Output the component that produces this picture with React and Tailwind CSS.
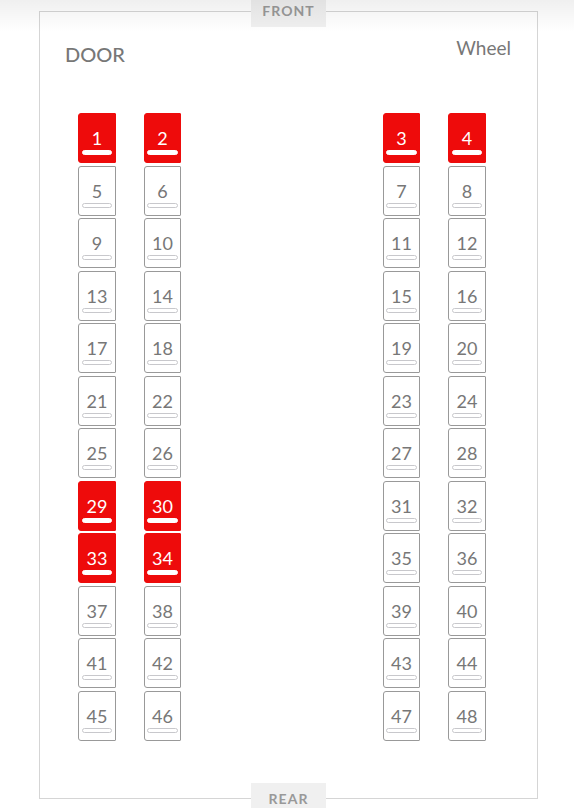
const ROWS = 12;
const TAKEN = new Set([1, 2, 3, 4, 29, 30, 33, 34]);

function Seat({ number, padding }) {
  const taken = TAKEN.has(number);
  return (
    <button
      type="button"
      disabled={taken}
      className={`flex h-[50px] w-full flex-col items-center justify-end rounded-l-[3px] rounded-r-[1px] border pb-[7px] text-lg leading-[22px] ${padding} ${
        taken ? 'border-[#ee0b0b] bg-[#ee0b0b] text-white' : 'border-[#999] bg-white text-[#777]'
      }`}
    >
      <span>{number}</span>
      <span
        className={`mt-px h-[5px] w-full rounded-[3px] border ${
          taken ? 'border-white bg-white' : 'border-[#c8c8cc] bg-white'
        }`}
      />
    </button>
  );
}

function SeatBlock({ first, columns, paddings }) {
  const rows = Array.from({ length: ROWS }, (_, i) => first + i * 4);
  return (
    <div className="flex h-[628px] w-[103px] flex-col justify-between">
      {rows.map((n) => (
        <div key={n} className={`grid justify-between ${columns}`}>
          <Seat number={n} padding={paddings[0]} />
          <Seat number={n + 1} padding={paddings[1]} />
        </div>
      ))}
    </div>
  );
}

function EndLabel({ children, className }) {
  return (
    <span
      className={`absolute inset-x-0 mx-auto flex h-8 w-[75px] items-center justify-center bg-[#f0f0f0] pb-px text-sm leading-5 font-bold tracking-[1px] text-[#999] ${className}`}
    >
      {children}
    </span>
  );
}

export default function App() {
  return (
    <main className="relative overflow-hidden bg-white pt-[11px] pr-9 pb-[9px] pl-[39px] font-['Lato',sans-serif] text-[#777]">
      <section className="relative border border-[#d5d5d5] pb-[57px]">
        <EndLabel className="-top-[17px]">FRONT</EndLabel>
        <header className="flex items-start justify-between pt-6 pr-[26px] pl-[25px] text-xl leading-6">
          <span className="pt-[6px] font-medium">DOOR</span>
          <span className="text-[19px]">Wheel</span>
        </header>
        <div className="mt-[47px] flex justify-between pr-[51px] pl-[38px]">
          <SeatBlock first={1} columns="grid-cols-[38px_37px]" paddings={['px-[3px]', 'px-[2px]']} />
          <SeatBlock first={3} columns="grid-cols-[37px_38px]" paddings={['px-[2px]', 'px-[3px]']} />
        </div>
        <EndLabel className="-bottom-[17px]">REAR</EndLabel>
      </section>
      <div className="pointer-events-none absolute inset-x-0 top-0 h-8 bg-linear-to-b from-black/6 to-transparent" />
    </main>
  );
}
